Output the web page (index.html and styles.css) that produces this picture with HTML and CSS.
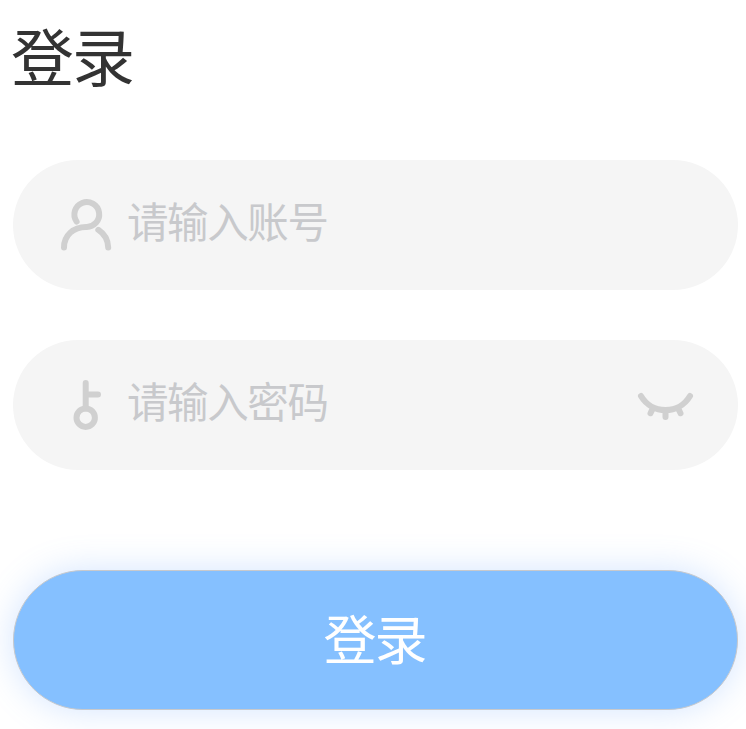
FILE: index.html
```html
<!DOCTYPE html>
<html lang="zh-CN">
<head>
<meta charset="utf-8">
<title>登录</title>
<link rel="stylesheet" href="styles.css">
</head>
<body>
<main class="login">
  <h1 class="title">登录</h1>
  <form class="form">
    <div class="field">
      <svg class="icon" viewBox="0 0 60 60"><path d="M20.600 26.300A12.400 12.400 0 1 1 30 31.600C17.500 31.600 8 40 8 52.200M42.300 34.500C48.800 38.800 52 44.800 52.200 52.200" transform="translate(0 .3)"/></svg>
      <span class="placeholder">请输入账号</span>
    </div>
    <div class="field">
      <svg class="icon" viewBox="0 0 60 60"><circle cx="29.700" cy="42.700" r="9.200"/><path d="M29.700 33.500V8M29.700 19.500H42"/></svg>
      <span class="placeholder">请输入密码</span>
      <svg class="icon" viewBox="0 0 60 60"><path d="M6 21C17 39.700 44 39.700 55 21M17.500 34L15.500 38.200M30.500 36V42M43.500 34L45.500 38.200"/></svg>
    </div>
    <button class="submit" type="button"><span class="label">登录</span></button>
  </form>
</main>
</body>
</html>
```
FILE: styles.css
```css
* { box-sizing: border-box; }
body { margin: 0; background: #fff; font-family: "Noto Sans CJK SC", sans-serif; }
.login { min-height: 100vh; padding: 14px 8px 0 11px; }
.title { margin: 0; height: 80px; font-size: 63px; line-height: 80px; font-weight: 400; letter-spacing: -2px; color: #333; }
.form { display: flex; flex-direction: column; gap: 50px; margin: 66px 0 0 2px; }
.field { display: flex; align-items: center; height: 130px; padding: 0 43px; border-radius: 65px; background: #f5f5f5; }
.icon { width: 60px; height: 60px; flex: none; fill: none; stroke: #d0d0d0; stroke-width: 6px; stroke-linecap: round; stroke-linejoin: round; }
.placeholder { flex: 1; margin-left: 11px; padding-bottom: 10px; font-size: 41.500px; line-height: 60px; letter-spacing: -1.400px; color: #c8c9cc; }
.submit { height: 140px; margin-top: 50px; padding: 0; border: 1px solid #c8c9cc; border-radius: 70px; background: #85c0ff; color: #fff; font: inherit; font-size: 53px; letter-spacing: -2px; box-shadow: 0 0 34px rgba(102,160,255,.28); }
.label { display: block; padding: 0 2px 6px 0; }
```
